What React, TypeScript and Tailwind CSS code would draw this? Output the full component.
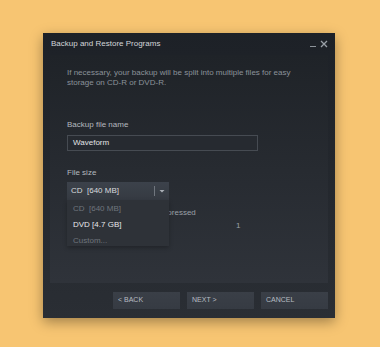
export default function App() {
  return (
    <div
      className="w-[380px] h-[347px] bg-[#f7c572] pt-[33px] pl-[43px]"
      style={{ fontFamily: '"Liberation Sans", Arial, sans-serif' }}
    >
      {/* Dialog window */}
      <div className="w-[292px] h-[285px] flex flex-col bg-gradient-to-b from-[#1d2127] to-[#2a2e34] shadow-[0_4px_12px_rgba(0,0,0,0.35)]">
        {/* Title bar */}
        <div className="h-[22px] flex items-center justify-between pl-[8px] pr-[7px]">
          <span className="text-[8px] text-[#d2d5d9]">Backup and Restore Programs</span>
          <div className="flex items-end gap-[4px] text-[#8d939a]">
            <div className="w-[6px] h-[1.5px] bg-[#8d939a] mb-[1px]" />
            <svg width="8" height="8" viewBox="0 0 8 8">
              <path d="M1 1 L7 7 M7 1 L1 7" stroke="#9aa0a7" strokeWidth="1.3" />
            </svg>
          </div>
        </div>

        {/* Content panel */}
        <div className="mx-[7px] h-[228px] bg-gradient-to-b from-[#1f2328] to-[#2f333a] pl-[17px] pt-[13px] relative">
          <p className="text-[8px] leading-[10px] text-[#8b929a] w-[240px]">
            If necessary, your backup will be split into multiple files for easy storage on CD-R or DVD-R.
          </p>

          <div className="mt-[32px] text-[8px] leading-[10px] text-[#b4b9bf]">Backup file name</div>
          <div className="mt-[5px] w-[191px] h-[16px] border border-[#464b52] bg-[#262a30] flex items-center pl-[5px] text-[8px] text-[#e2e4e7]">
            Waveform
          </div>

          <div className="mt-[17px] text-[8px] leading-[10px] text-[#b4b9bf]">File size</div>
          <div className="mt-[4px] w-[102px] h-[18px] bg-gradient-to-b from-[#3c424b] to-[#353a42] flex items-center text-[8px] text-[#d8dbde]">
            <span className="flex-1 pl-[4px]">CD&nbsp; [640 MB]</span>
            <div className="w-px h-[10px] bg-[#70767e]" />
            <svg width="14" height="8" viewBox="0 0 14 8">
              <path d="M4.5 3 L9.5 3 L7 5.5 Z" fill="#aab0b7" />
            </svg>
          </div>

          {/* Options behind the open list */}
          <div className="mt-[8px] text-[8px] leading-[10px] text-[#9aa0a7] pl-[75px]">Uncompressed</div>
          <div className="mt-[3px] text-[8px] leading-[10px] text-[#9aa0a7] pl-[169px]">1</div>

          {/* Open dropdown list */}
          <div className="absolute left-[17px] top-[145px] w-[102px] h-[46px] bg-[#2e3238] shadow-[0_2px_4px_rgba(0,0,0,0.25)] flex flex-col gap-[6px] pt-[4px] pl-[6px] text-[8px] leading-[10px]">
            <span className="text-[#6f757d]">CD&nbsp; [640 MB]</span>
            <span className="text-[#e6e8ea]">DVD [4.7 GB]</span>
            <span className="text-[#6f757d]">Custom...</span>
          </div>
        </div>

        {/* Footer buttons */}
        <div className="flex justify-end gap-[7px] pr-[7px] pt-[9px]">
          {["< BACK", "NEXT >", "CANCEL"].map((label) => (
            <button
              key={label}
              className="w-[67px] h-[17px] bg-gradient-to-b from-[#3a3f47] to-[#363b43] text-left pl-[5px] text-[7px] text-[#b7bcc2]"
            >
              {label}
            </button>
          ))}
        </div>
      </div>
    </div>
  );
}
